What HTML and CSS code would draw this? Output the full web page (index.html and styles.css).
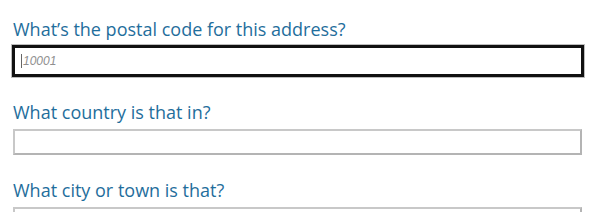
FILE: index.html
```html
<html>
<head>
<title>Address</title>
<link rel="stylesheet" href="styles.css">
</head>
<body>
<div class="form">
	<div class="field">
		<label class="question">What’s the postal code for this address?</label>
		<div class="box focus"><span class="caret"></span><span class="hint">10001</span></div>
	</div>
	<div class="field">
		<label class="question">What country is that in?</label>
		<div class="box"></div>
	</div>
	<div class="field">
		<label class="question">What city or town is that?</label>
		<div class="box"></div>
	</div>
</div>
</body>
</html>
```

FILE: styles.css
```css
body{
	margin: 0;
	background: #fff;
	font-family: "Open Sans", "Noto Sans", sans-serif;
}

.form{
	padding: 17px 18px 0 13px;
	display: flex;
	flex-direction: column;
	gap: 23px;
}

.field{
	display: flex;
	flex-direction: column;
	gap: 5px;
}

.question{
	color: #1f6e9c;
	font-size: 18px;
	line-height: 24px;
}

/* plain text box */
.box{
	height: 22px;
	border: 2px solid #c8c8c8;
	border-right-color: #b4b4b4;
	border-bottom-color: #b4b4b4;
	background: #fff;
	display: flex;
	align-items: center;
	padding-left: 6px;
}

/* the box with focus */
.box.focus{
	margin: -1px -2px 0 -1px;
	height: 26px;
	border: 3px solid #111;
	box-shadow: 0 0 0 1px #bdbdbd;
	padding-left: 6px;
}

.caret{
	width: 1px;
	height: 14px;
	background: #666;
	margin-right: 1px;
}

.hint{
	color: #8f8f8f;
	font-style: italic;
	font-size: 12px;
	font-family: "Liberation Sans", sans-serif;
}
```
